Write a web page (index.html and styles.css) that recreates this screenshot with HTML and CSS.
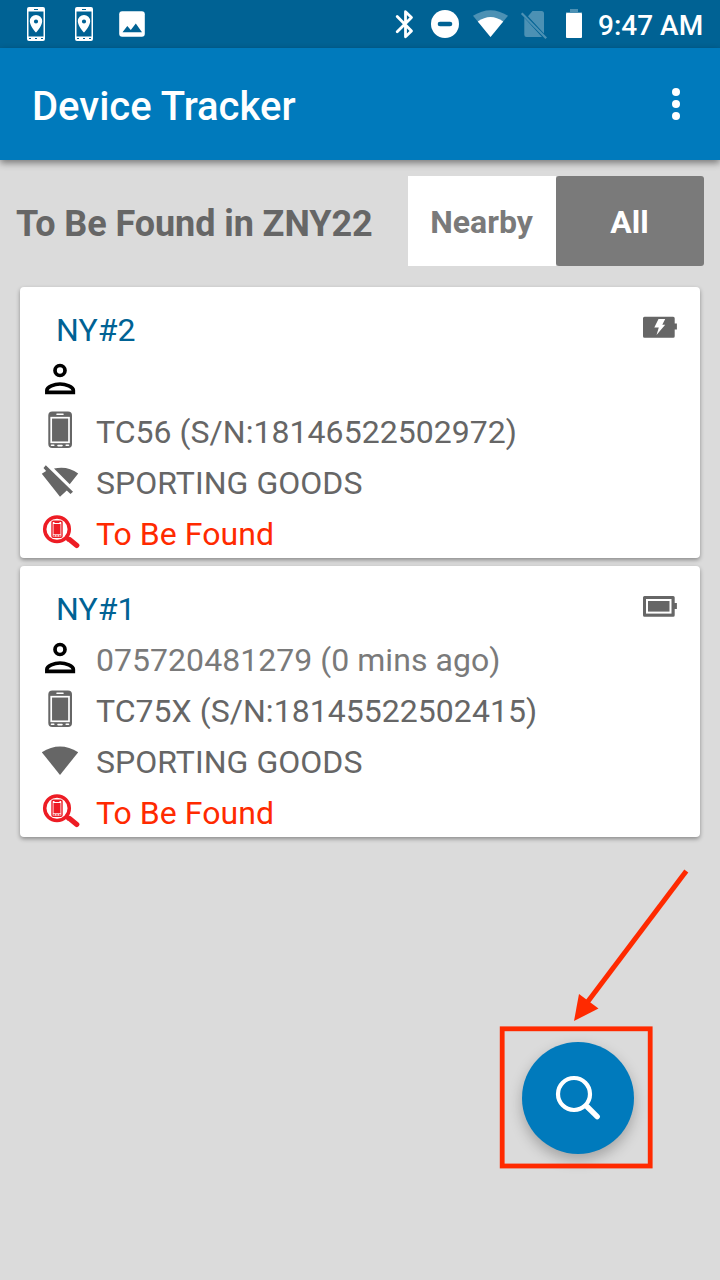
FILE: index.html
```
<!DOCTYPE html>
<html lang="en">
<head>
<meta charset="utf-8">
<title>Device Tracker</title>
<link rel="stylesheet" href="styles.css">
</head>
<body>
<svg class="defs" width="0" height="0" aria-hidden="true">
  <symbol id="locator" viewBox="0 0 24 36">
    <path fill="#fff" fill-rule="evenodd" d="M5 1h14a2 2 0 0 1 2 2v30a2 2 0 0 1-2 2H5a2 2 0 0 1-2-2V3a2 2 0 0 1 2-2zM4.500 5.500v25h15v-25zM10 3v1h4V3zM5 32v1h2v-1zM11 32v1h2v-1zM17 32v1h2v-1z"/>
    <path fill="#fff" fill-rule="evenodd" d="M12 9a6.200 6.200 0 0 0-6.200 6.200C5.800 20 12 26.500 12 26.500s6.200-6.500 6.200-11.300A6.200 6.200 0 0 0 12 9zm0 4.400a2.100 2.100 0 1 1 0 4.200 2.100 2.100 0 0 1 0-4.200z"/>
  </symbol>
  <symbol id="person" viewBox="0 0 40 51">
    <g fill="none" stroke="#000" stroke-width="3.700">
      <circle cx="20" cy="14.500" r="5"/>
      <path d="M6.900 36.300v-2c0-3.400 7.300-6.300 13.100-6.300s13.300 2.900 13.300 6.300v2z"/>
    </g>
  </symbol>
  <symbol id="phone" viewBox="0 0 40 51">
    <rect x="8.300" y="4.600" width="23.700" height="36.400" rx="4" fill="#666"/>
    <rect x="11.200" y="10.700" width="17.800" height="24.600" fill="#666" stroke="#fff" stroke-width="1.700"/>
    <path stroke="#fff" stroke-width="1.600" stroke-linecap="round" d="M17 7.200h6M11.500 38.300h2.300M18 38.600h4M26.200 38.300h2.300"/>
  </symbol>
  <symbol id="wifi" viewBox="0 0 40 51">
    <path fill="#666" d="M1.800 15.200Q20 3.800 38.200 15.200L20 38z"/>
  </symbol>
  <symbol id="wifi-off" viewBox="0 0 40 51">
    <path fill="#666" d="M14 10.600Q27.500 7.500 38.200 15.500L29.700 26.300zM5.800 7.300l27.200 26.500-2.500 2.200-3.700-3.500L20 38.800 1.800 15.800l4.300-2.900-2.600-3z"/>
  </symbol>
  <symbol id="seek" viewBox="0 0 40 51">
    <g fill="none" stroke="#ed1c24">
      <circle cx="17" cy="20.300" r="12.300" stroke-width="3.500"/>
      <path stroke-width="3.800" d="M25.500 28l3.500 3.500"/>
      <path stroke-width="5.200" stroke-linecap="round" d="M29.500 30.500l7.300 5.900"/>
      <rect x="12" y="12.200" width="10" height="16.200" rx="1.300" stroke-width="1.400"/>
    </g>
    <rect x="13.500" y="15" width="7" height="10.300" fill="#ed1c24"/>
    <path stroke="#ed1c24" stroke-width="1.100" d="M14.500 13.500h5M13.300 26.900h2M16.200 26.900h1.600M18.700 26.900h2"/>
  </symbol>
</svg>

<header class="status">
  <div class="notices">
    <svg class="device"><use href="#locator"/></svg>
    <svg class="device"><use href="#locator"/></svg>
    <svg class="photo" viewBox="0 0 28 28"><rect x="1.200" y="1.200" width="25.600" height="25.500" rx="3" fill="#fff"/><path fill="#006294" d="M4.500 22.300l4.800-6.300 3.500 4 5-6.500 6.200 8.800z"/></svg>
  </div>
  <div class="system">
    <svg class="bluetooth" viewBox="0 0 24 32"><path fill="none" stroke="#fff" stroke-width="2.800" stroke-linejoin="round" stroke-linecap="round" d="M5.200 8.500l14.300 14.600-6 5.700V3.700l6 5.700L5.200 23.800"/></svg>
    <svg class="dnd" viewBox="0 0 28 28"><circle cx="14" cy="14" r="14" fill="#fff"/><path stroke="#006294" stroke-width="4.600" stroke-linecap="round" d="M9 14h10"/></svg>
    <svg class="signal" viewBox="0 0 37 32"><path fill="#4c91b4" d="M1 7.800Q18.500-3.500 36 7.800L18.500 29z"/><path fill="#fff" d="M5.800 13.500Q18.500 4.500 31.200 13.500L18.500 29z"/></svg>
    <svg class="sim" viewBox="0 0 27 32"><path fill="#4c91b4" d="M12.500 3h9q2.500 0 2.500 2.500v20L8 8.200zM4.300 9.800L22 29H6.500q-2.200 0-2.200-2.200z"/><path stroke="#4c91b4" stroke-width="2.200" d="M1.700 5.300l24.500 25"/></svg>
    <svg class="charge" viewBox="0 0 18 32"><path fill="#4c91b4" d="M5 1h8v3h4v4H1V4h4z"/><rect x="1" y="5" width="16" height="25" rx="1" fill="#fff"/></svg>
    <span class="time">9:47 AM</span>
  </div>
</header>

<div class="appbar">
  <h1 class="title">Device Tracker</h1>
  <div class="more"><i class="dot"></i><i class="dot"></i><i class="dot"></i></div>
</div>

<main class="content">
  <div class="filter">
    <h2 class="heading">To Be Found in ZNY22</h2>
    <div class="tabs">
      <div class="tab">Nearby</div>
      <div class="tab active">All</div>
    </div>
  </div>

  <section class="card">
    <div class="row head">
      <span class="name">NY#2</span>
      <svg class="battery" viewBox="0 0 36 24"><path fill="#666" d="M2.500 1.700h28.700q1.500 0 1.500 1.500V8.500h2.200v6h-2.200v6.700q0 1.500-1.500 1.500H2.500Q1 22.700 1 21.200v-18q0-1.500 1.500-1.500z"/><path fill="#fff" d="M16.500 4h6.700l-2.900 5.700h2.900L14.500 20l2.300-7.500h-4.500z"/></svg>
    </div>
    <div class="row"><svg class="icon"><use href="#person"/></svg></div>
    <div class="row"><svg class="icon"><use href="#phone"/></svg><span>TC56 (S/N:18146522502972)</span></div>
    <div class="row"><svg class="icon"><use href="#wifi-off"/></svg><span>SPORTING GOODS</span></div>
    <div class="row alert"><svg class="icon"><use href="#seek"/></svg><span>To Be Found</span></div>
  </section>

  <section class="card">
    <div class="row head">
      <span class="name">NY#1</span>
      <svg class="battery" viewBox="0 0 36 24"><path fill="#666" d="M2.500 2h28.700q1.500 0 1.500 1.500V9h2.200v6h-2.200v6.200q0 1.500-1.500 1.500H2.500Q1 22.700 1 21.200V3.500Q1 2 2.500 2z"/><rect x="5" y="6" width="23.500" height="12.600" fill="#666" stroke="#fff" stroke-width="2"/></svg>
    </div>
    <div class="row muted"><svg class="icon"><use href="#person"/></svg><span>075720481279 (0 mins ago)</span></div>
    <div class="row"><svg class="icon"><use href="#phone"/></svg><span>TC75X (S/N:18145522502415)</span></div>
    <div class="row"><svg class="icon"><use href="#wifi"/></svg><span>SPORTING GOODS</span></div>
    <div class="row alert"><svg class="icon"><use href="#seek"/></svg><span>To Be Found</span></div>
  </section>
</main>

<div class="fab">
  <svg class="lens" viewBox="0 0 48 48"><g fill="none" stroke="#fff"><circle cx="20" cy="20" r="16" stroke-width="4.200"/><path stroke-width="4" d="M31 31l4 4"/><path stroke-width="5.400" stroke-linecap="round" d="M33.500 33l9.700 9.700"/></g></svg>
</div>

<svg class="callout" viewBox="490 860 210 320">
  <rect x="502.200" y="1028.800" width="148" height="137.200" fill="none" stroke="#ff2a00" stroke-width="4.800"/>
  <path stroke="#ff2a00" stroke-width="5" d="M686.300 871L586 1004"/>
  <path fill="#ff2a00" d="M574 1021l5-27 19.500 14.500z"/>
</svg>
</body>
</html>
```

FILE: styles.css
```
* { box-sizing: border-box; }
body {
  position: relative;
  margin: 0;
  width: 720px;
  height: 1280px;
  overflow: hidden;
  background: #dbdbdb;
  color: #666;
  font-family: Roboto, sans-serif;
}
svg { display: block; flex: none; }
.defs { position: absolute; }

.status {
  display: flex;
  justify-content: space-between;
  align-items: center;
  height: 48px;
  background: #006294;
}
.notices { display: flex; align-items: center; padding-left: 24px; }
.device { width: 24px; height: 36px; margin-right: 24px; }
.photo { width: 28px; height: 28px; margin-left: -2px; }
.system { display: flex; align-items: center; width: 328px; height: 48px; }
.bluetooth { width: 24px; height: 32px; }
.dnd { width: 28px; height: 28px; margin-left: 15px; }
.signal { width: 37px; height: 32px; margin-left: 13px; }
.sim { width: 27px; height: 32px; margin-left: 11px; }
.charge { width: 18px; height: 32px; margin-left: 18px; }
.time {
  margin-left: 15px;
  padding-top: 3px;
  color: #fff;
  font-size: 28px;
  font-weight: 500;
  line-height: 32px;
  white-space: nowrap;
}

.appbar {
  display: flex;
  justify-content: space-between;
  align-items: center;
  height: 112px;
  padding: 0 40px 0 32px;
  background: #007abc;
  box-shadow: 0 3px 7px rgba(0, 0, 0, .45);
}
.title { margin: 6px 0 0; color: #fff; font-size: 40px; font-weight: 500; line-height: 48px; }
.more { display: flex; flex-direction: column; gap: 4px; }
.dot { width: 8px; height: 8px; border-radius: 50%; background: #fff; }

.content { padding: 16px 16px 0; }
.filter { display: flex; justify-content: space-between; height: 90px; margin-bottom: 21px; }
.heading { margin: 0; padding-top: 6px; font-size: 36px; font-weight: 700; line-height: 85px; letter-spacing: -.08px; }
.tabs { display: flex; }
.tab {
  width: 148px;
  padding-right: 1px;
  background: #fff;
  color: #7a7a7a;
  font-size: 32px;
  font-weight: 700;
  line-height: 92px;
  text-align: center;
}
.active { background: #7a7a7a; color: #fff; border-radius: 3px; }

.card {
  height: 271px;
  margin: 0 4px 8px;
  padding: 18px 20px 0;
  background: #fff;
  border-radius: 4px;
  box-shadow: 0 2px 4px rgba(0, 0, 0, .36);
}
.row { display: flex; gap: 16px; height: 51px; font-size: 32px; line-height: 51px; letter-spacing: .04px; white-space: nowrap; }
.head { justify-content: space-between; padding: 0 2px 0 16px; }
.name { color: #006294; }
.battery { width: 36px; height: 24px; margin-top: 10px; }
.icon { width: 40px; height: 51px; }
.muted { color: #7a7a7a; }
.alert { color: #ff2a00; }

.fab {
  position: absolute;
  left: 522px;
  top: 1042px;
  display: grid;
  place-items: center;
  width: 112px;
  height: 112px;
  border-radius: 50%;
  background: #007abc;
  box-shadow: 0 6px 14px rgba(0, 0, 0, .26);
}
.lens { width: 48px; height: 48px; }
.callout { position: absolute; left: 490px; top: 860px; width: 210px; height: 320px; }
```
